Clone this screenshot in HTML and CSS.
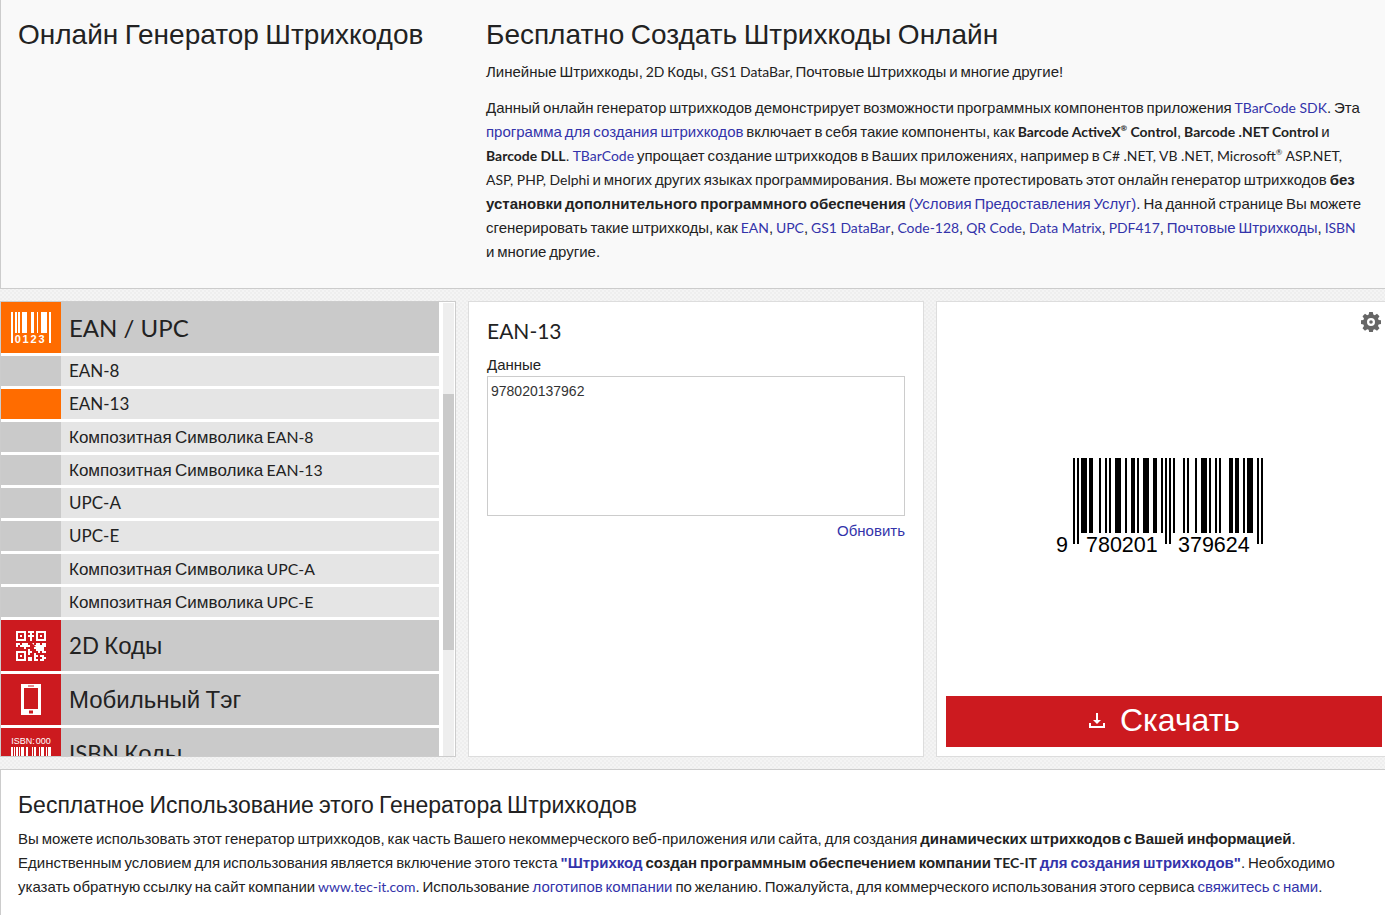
FILE: index.html
```html
<!DOCTYPE html>
<html lang="ru">
<head>
  <meta charset="UTF-8" />
  <title>Онлайн Генератор Штрихкодов</title>
  <link rel="stylesheet" href="styles.css">
</head>
<body>
  <header class="intro">
    <h1 class="intro-title">Онлайн Генератор Штрихкодов</h1>
    <div class="intro-text">
      <h2>Бесплатно Создать Штрихкоды Онлайн</h2>
      <p class="lead">Линейные Штрихкоды, <span class="la">2D</span> Коды, <span class="la">GS1 DataBar,</span> Почтовые Штрихкоды и многие другие!</p>
      <p>Данный онлайн генератор штрихкодов демонстрирует возможности программных компонентов приложения <a class="la" href="#">TBarCode SDK</a>. Эта <a href="#">программа для создания штрихкодов</a> включает в себя такие компоненты, как <b class="la">Barcode ActiveX<sup>®</sup> Control</b>, <b class="la">Barcode .NET Control</b> и <b class="la">Barcode DLL</b>. <a class="la" href="#">TBarCode</a> упрощает создание штрихкодов в Ваших приложениях, например в <span class="la">C# .NET, VB .NET, Microsoft<sup>®</sup> ASP.NET, ASP, PHP, Delphi</span> и многих других языках программирования. Вы можете протестировать этот онлайн генератор штрихкодов <b>без установки дополнительного программного обеспечения</b> <a href="#">(Условия Предоставления Услуг)</a>. На данной странице Вы можете сгенерировать такие штрихкоды, как <a class="la" href="#">EAN</a>, <a class="la" href="#">UPC</a>, <a class="la" href="#">GS1 DataBar</a>, <a class="la" href="#">Code-128</a>, <a class="la" href="#">QR Code</a>, <a class="la" href="#">Data Matrix</a>, <a class="la" href="#">PDF417</a>, <a href="#">Почтовые Штрихкоды</a>, <a class="la" href="#">ISBN</a> и многие другие.</p>
    </div>
  </header>

  <main class="workspace">
    <nav class="panel types">
      <div class="type-list">
        <div class="row group current">
          <span class="row-icon">
            <svg width="60" height="51" viewBox="0 0 60 51" fill="#fff">
              <path d="M10 10h2v31h-2zM14 10h2v21h-2zM17 10h2v21h-2zM21 10h5v21h-5zM30 10h3v21h-3zM36 10h1v21h-1zM40 10h6v21h-6zM48 10h2v31h-2z"/>
              <text x="29.500" y="40.500" class="icon-digits">0123</text>
            </svg>
          </span>
          <span class="row-label la">EAN / UPC</span>
        </div>
        <div class="row item"><span class="row-icon"></span><span class="row-label la">EAN-8</span></div>
        <div class="row item selected"><span class="row-icon"></span><span class="row-label la">EAN-13</span></div>
        <div class="row item"><span class="row-icon"></span><span class="row-label">Композитная Символика <span class="la">EAN-8</span></span></div>
        <div class="row item"><span class="row-icon"></span><span class="row-label">Композитная Символика <span class="la">EAN-13</span></span></div>
        <div class="row item"><span class="row-icon"></span><span class="row-label la">UPC-A</span></div>
        <div class="row item"><span class="row-icon"></span><span class="row-label la">UPC-E</span></div>
        <div class="row item"><span class="row-icon"></span><span class="row-label">Композитная Символика <span class="la">UPC-A</span></span></div>
        <div class="row item"><span class="row-icon"></span><span class="row-label">Композитная Символика <span class="la">UPC-E</span></span></div>
        <div class="row group">
          <span class="row-icon">
            <svg width="60" height="51" viewBox="0 0 60 51" fill="#fff">
              <path fill-rule="evenodd" d="M15 11h10v10h-10zM17 13v6h6v-6zM19 15h2v2h-2zM35 11h10v10h-10zM37 13v6h6v-6zM39 15h2v2h-2zM15 31h10v10h-10zM17 33v6h6v-6zM19 35h2v2h-2z"/>
              <path d="M27 11h6v2h-2v2h2v2h-2v4h-2v-4h-2v-2h2v-2h-2zM15 23h4v2h-2v2h-2zM21 23h6v2h2v2h-4v2h-2v-2h-4v-2h2zM31 23h2v2h2v-2h4v2h2v-2h4v4h-2v4h2v2h-4v-2h-2v2h-2v-2h-2v-2h-2v-2h2zM27 29h2v2h2v2h-2v2h-2zM27 37h4v4h-4zM33 33h2v2h2v2h-2v2h-2zM39 35h4v2h2v2h-2v2h-4v-2h2v-2h-2zM33 39h4v2h-4z"/>
            </svg>
          </span>
          <span class="row-label"><span class="la">2D</span> Коды</span>
        </div>
        <div class="row group">
          <span class="row-icon">
            <svg width="60" height="51" viewBox="0 0 60 51">
              <path fill="#fff" fill-rule="evenodd" d="M20 10h20v31h-20zM23 14v21h14v-21zM27 11.500v1h6v-1zM28 36.500v3h4v-3z"/>
            </svg>
          </span>
          <span class="row-label">Мобильный Тэг</span>
        </div>
        <div class="row group">
          <span class="row-icon">
            <svg width="60" height="51" viewBox="0 0 60 51" fill="#fff">
              <text x="30" y="16" class="icon-isbn">ISBN: 000</text>
              <path d="M10 19h2v28h-2zM13 19h1v21h-1zM15 19h2v21h-2zM18 19h1v21h-1zM20 19h3v21h-3zM25 19h2v21h-2zM31 19h1v21h-1zM33 19h2v21h-2zM38 19h1v21h-1zM40 19h3v21h-3zM45 19h1v21h-1zM47 19h3v28h-3z"/>
            </svg>
          </span>
          <span class="row-label"><span class="la">ISBN</span> Коды</span>
        </div>
      </div>
      <div class="scrollbar"><div class="scroll-thumb"></div></div>
    </nav>

    <section class="panel data">
      <h3 class="la">EAN-13</h3>
      <label class="data-label" for="barcode-data">Данные</label>
      <textarea id="barcode-data" class="data-input">978020137962</textarea>
      <a class="refresh" href="#">Обновить</a>
    </section>

    <section class="panel preview">
      <svg class="gear" width="20" height="20" viewBox="0 0 20 20">
        <path fill="#666" fill-rule="evenodd" d="M8.200 0h3.600l.5 2.600 1.500.6 2.200-1.500 2.500 2.500-1.500 2.200.6 1.500 2.600.5v3.600l-2.600.5-.6 1.500 1.500 2.200-2.500 2.500-2.200-1.500-1.500.6-.5 2.600h-3.600l-.5-2.600-1.500-.6-2.200 1.500-2.500-2.500 1.500-2.200-.6-1.500-2.600-.5v-3.600l2.600-.5.6-1.500-1.500-2.200 2.500-2.500 2.200 1.500 1.500-.6zM10 6a4 4 0 1 0 0 8 4 4 0 0 0 0-8z"/>
        <circle cx="10" cy="10" r="1.800" fill="#666"/>
      </svg>
      <div class="barcode-area">
        <svg class="barcode" width="216" height="100" viewBox="0 0 216 100" shape-rendering="crispEdges">
          <path d="M18 0v86h2v-86zM22 0v86h2v-86zM26 0v75h6v-75zM34 0v75h4v-75zM44 0v75h2v-75zM50 0v75h2v-75zM54 0v75h2v-75zM60 0v75h6v-75zM70 0v75h2v-75zM76 0v75h4v-75zM82 0v75h2v-75zM88 0v75h6v-75zM98 0v75h4v-75zM106 0v75h2v-75zM110 0v86h2v-86zM114 0v86h2v-86zM118 0v75h2v-75zM128 0v75h2v-75zM132 0v75h2v-75zM140 0v75h2v-75zM146 0v75h6v-75zM154 0v75h2v-75zM160 0v75h2v-75zM164 0v75h2v-75zM174 0v75h4v-75zM180 0v75h4v-75zM188 0v75h2v-75zM192 0v75h6v-75zM202 0v86h2v-86zM206 0v86h2v-86z"/>
          <g class="barcode-digits" shape-rendering="auto">
            <text x="1" y="94">9</text>
            <text x="31" y="94">780201</text>
            <text x="123" y="94">379624</text>
          </g>
        </svg>
      </div>
      <a class="download" href="#">
        <svg width="18" height="18" viewBox="0 0 18 18" fill="#fff">
          <path d="M8 2h2v7h3l-4 4-4-4h3zM1 12h2v3h12v-3h2v5h-16z"/>
        </svg>
        <span>Скачать</span>
      </a>
    </section>
  </main>

  <footer class="usage">
    <h2>Бесплатное Использование этого Генератора Штрихкодов</h2>
    <p>Вы можете использовать этот генератор штрихкодов, как часть Вашего некоммерческого веб-приложения или сайта, для создания <b>динамических штрихкодов с Вашей информацией</b>. Единственным условием для использования является включение этого текста <b><a href="#">"Штрихкод</a> создан программным обеспечением компании <span class="la">TEC-IT</span> <a href="#">для создания штрихкодов"</a></b>. Необходимо указать обратную ссылку на сайт компании <a class="la" href="#">www.tec-it.com</a>. Использование <a href="#">логотипов компании</a> по желанию. Пожалуйста, для коммерческого использования этого сервиса <a href="#">свяжитесь с нами</a>.</p>
  </footer>
</body>
</html>
```

FILE: styles.css
```css
* {
  box-sizing: border-box;
}
html {
  height: 100%;
}
body {
  margin: 0;
  height: 915px;
  overflow: hidden;
  background-color: #f1f1f1;
  background-image: repeating-conic-gradient(#eeeeee 0 25%, #f4f4f4 0 50%);
  background-size: 4px 4px;
  color: #222;
  font-family: "Liberation Sans", sans-serif;
  font-size: 15px;
  line-height: 24px;
  word-spacing: -0.085em;
}
/* латиница идет другим шрифтом */
.la {
  font-family: Lato, sans-serif;
  font-size: 0.93em;
  word-spacing: 0;
}
a {
  color: #3333aa;
  text-decoration: none;
}
h1, h2, h3, p {
  margin: 0;
  font-weight: normal;
}
sup {
  font-size: 8px;
  line-height: 0;
  vertical-align: 6px;
}

/* верхний блок */
.intro {
  display: flex;
  height: 289px;
  padding: 17px 18px 0 17px;
  background: #f9f9f9;
  border-left: 1px solid #ccc;
  border-bottom: 1px solid #ccc;
}
.intro-title {
  width: 468px;
  flex: none;
  font-size: 28px;
  line-height: 36px;
}
.intro-text h2 {
  font-size: 28px;
  line-height: 36px;
}
.lead {
  margin-top: 7px;
  margin-bottom: 12px;
}

/* панели */
.workspace {
  display: flex;
  gap: 12px;
  height: 456px;
  margin-top: 12px;
}
.panel {
  height: 456px;
  background: #fff;
  border: 1px solid #ddd;
}
.types {
  width: 456px;
  flex: none;
  display: flex;
  overflow: hidden;
  border: 1px solid #ccc;
}
.type-list {
  width: 438px;
  flex: none;
}
.row {
  display: flex;
  margin-bottom: 3px;
}
.row-icon {
  width: 60px;
  flex: none;
}
.row-icon svg {
  display: block;
}
.row-label {
  flex: 1;
  padding-left: 8px;
}
.group {
  height: 51px;
}
.group .row-icon {
  background: #cc1a1f;
}
.group.current .row-icon {
  background: #ff6c00;
}
.group .row-label {
  background: #cacaca;
  font-size: 24px;
  line-height: 51px;
}
.item {
  height: 30px;
}
.item .row-icon {
  background: #cacaca;
}
.item.selected .row-icon {
  background: #ff6c00;
}
.item .row-label {
  background: #e5e5e5;
  font-size: 17px;
  line-height: 30px;
}
.icon-digits {
  font: bold 11px "Liberation Sans", sans-serif;
  letter-spacing: 1.800px;
  text-anchor: middle;
}
.icon-isbn {
  font: 9px "Liberation Sans", sans-serif;
  text-anchor: middle;
}
.scrollbar {
  flex: 1;
  margin: 1px 1px 0 4px;
  background: #eee;
}
.scroll-thumb {
  height: 256px;
  margin-top: 91px;
  background: #cacaca;
}

.data {
  width: 456px;
  flex: none;
  padding: 16px 18px 0 18px;
}
.data h3 {
  font-size: 21px;
  line-height: 26px;
}
.data-label {
  display: block;
  margin-top: 10px;
  font-size: 15px;
  line-height: 22px;
  word-spacing: 0;
}
.data-input {
  display: block;
  width: 100%;
  height: 140px;
  padding: 3px;
  border: 1px solid #ccc;
  resize: none;
  color: #333;
  font-family: "Liberation Sans", sans-serif;
  font-size: 14px;
  line-height: 22px;
  outline: none;
}
.refresh {
  display: block;
  margin-top: 3px;
  text-align: right;
  font-size: 15px;
  line-height: 24px;
}

.preview {
  position: relative;
  flex: 1;
  display: flex;
  flex-direction: column;
  padding: 0 3px 9px 9px;
  border-right: none;
}
.gear {
  position: absolute;
  top: 10px;
  right: 4px;
}
.barcode-area {
  flex: 1;
  padding: 156px 0 0 109px;
}
.barcode {
  display: block;
}
.barcode-digits {
  font: 21.500px "Liberation Sans", sans-serif;
}
.download {
  display: flex;
  align-items: center;
  justify-content: center;
  gap: 14px;
  height: 51px;
  padding-bottom: 3px;
  background: #cc1a1f;
  color: #fff;
  font-size: 32px;
  line-height: 48px;
}

/* нижний блок */
.usage {
  height: 146px;
  margin-top: 12px;
  padding: 19px 18px 0 17px;
  background: #fff;
  border-top: 1px solid #ccc;
  border-left: 1px solid #ccc;
}
.usage h2 {
  font-size: 23px;
  line-height: 32px;
  margin-bottom: 6px;
}
```
